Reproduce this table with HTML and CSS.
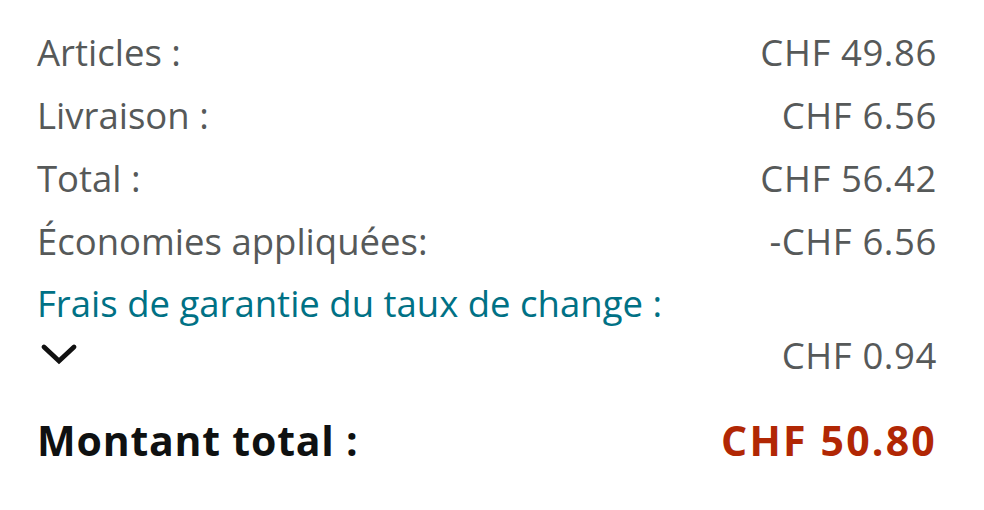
FILE: index.html
```html
<!DOCTYPE html>
<html lang="fr">
<head>
<meta charset="utf-8">
<link rel="stylesheet" href="styles.css">
</head>
<body>
<div class="summary">
  <div class="row"><span>Articles :</span><span class="num">CHF 49.86</span></div>
  <div class="row"><span>Livraison :</span><span class="num">CHF 6.56</span></div>
  <div class="row"><span>Total :</span><span class="num">CHF 56.42</span></div>
  <div class="row"><span>Économies appliquées:</span><span class="num">-CHF 6.56</span></div>
  <div class="row link"><span>Frais de garantie du taux de change :</span></div>
  <div class="row chev-row">
    <svg class="chev" width="42" height="26" viewBox="0 0 42 26"><path d="M7 6 L22 20 L37 6" fill="none" stroke="#111" stroke-width="4.8" stroke-linecap="round" stroke-linejoin="miter"/></svg>
    <span class="num">CHF 0.94</span>
  </div>
  <div class="row grand"><span class="label">Montant total :</span><span class="price">CHF 50.80</span></div>
</div>
</body>
</html>
```
FILE: styles.css
```css
html, body {
  margin: 0;
  padding: 0;
  background: #fff;
}
body {
  font-family: "Open Sans", "Noto Sans", sans-serif;
  color: #565959;
}
.summary {
  padding: 20px 47px 0 37px;
}
.row {
  display: flex;
  justify-content: space-between;
  align-items: center;
  height: 63px;
  font-size: 36.5px;
}
.num {
  letter-spacing: 0.6px;
}
.link {
  color: #007185;
  height: 62px;
}
.chev-row {
  height: 42px;
}
.chev {
  display: block;
  margin-left: 0;
  margin-top: -2px;
}
.grand {
  margin-top: 32px;
  height: 64px;
  font-size: 41px;
  font-weight: 700;
  color: #0f1111;
}
.label {
  letter-spacing: 0.8px;
}
.price {
  color: #b12704;
  letter-spacing: 2.2px;
}
```
